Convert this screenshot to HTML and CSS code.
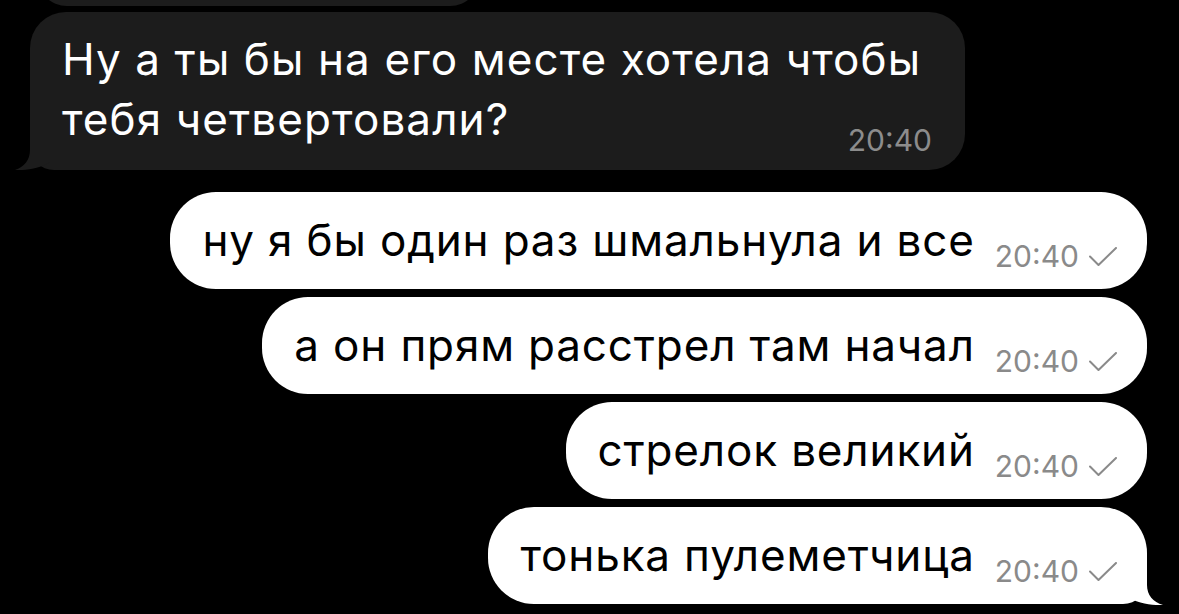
FILE: index.html
```html
<!DOCTYPE html>
<html lang="ru">
<head>
<meta charset="utf-8">
<title>Чат</title>
<link rel="stylesheet" href="styles.css">
</head>
<body>
<main class="chat">
  <div class="bubble in partial"></div>

  <div class="bubble in with-tail">
    <p class="text">Ну а ты бы на его месте хотела чтобы тебя четвертовали?</p>
    <span class="time">20:40</span>
    <svg class="tail tail-in" viewBox="0 0 50 44" width="50" height="44" aria-hidden="true"><path d="M15,0 L15,24 C15,34 9,41 0,44 C10,44.5 26,43 38,34 L38,0 Z"/></svg>
  </div>

  <div class="bubble out first">
    <p class="text">ну я бы один раз шмальнула и все</p>
    <span class="meta"><span class="time">20:40</span><svg class="check" viewBox="0 0 28 19" width="28" height="19" aria-hidden="true"><path d="M1,9.5 L9.5,18 L27,1"/></svg></span>
  </div>

  <div class="bubble out">
    <p class="text">а он прям расстрел там начал</p>
    <span class="meta"><span class="time">20:40</span><svg class="check" viewBox="0 0 28 19" width="28" height="19" aria-hidden="true"><path d="M1,9.5 L9.5,18 L27,1"/></svg></span>
  </div>

  <div class="bubble out">
    <p class="text">стрелок великий</p>
    <span class="meta"><span class="time">20:40</span><svg class="check" viewBox="0 0 28 19" width="28" height="19" aria-hidden="true"><path d="M1,9.5 L9.5,18 L27,1"/></svg></span>
  </div>

  <div class="bubble out last with-tail">
    <p class="text">тонька пулеметчица</p>
    <span class="meta"><span class="time">20:40</span><svg class="check" viewBox="0 0 28 19" width="28" height="19" aria-hidden="true"><path d="M1,9.5 L9.5,18 L27,1"/></svg></span>
    <svg class="tail tail-out" viewBox="0 0 50 44" width="50" height="44" aria-hidden="true"><path d="M34,0 L34,24 C34,34 40,41 50,44 C40,44.5 24,43 12,34 L12,0 Z"/></svg>
  </div>
</main>
</body>
</html>
```
FILE: styles.css
```css
html, body {
  margin: 0;
  padding: 0;
  background: #000;
}

body {
  width: 1179px;
  height: 614px;
  overflow: hidden;
  font-family: Inter, Roboto, "Noto Sans", sans-serif;
}

.chat {
  display: flex;
  flex-direction: column;
}

.bubble {
  position: relative;
  box-sizing: border-box;
}

.text {
  margin: 0;
}

/* incoming */
.bubble.in {
  align-self: flex-start;
  background: #1c1c1c;
  color: #fff;
  border-radius: 36px;
}

.bubble.in.partial {
  height: 60px;
  width: 443px;
  margin-top: -54px;
  margin-left: 37px;
  margin-bottom: 6px;
}

.bubble.in.with-tail {
  display: grid;
  margin-left: 30px;
  max-width: 935px;
  padding: 17px 33px 21px 32px;
  border-bottom-left-radius: 24px;
}

.bubble.in .text {
  grid-area: 1 / 1;
  font-size: 44px;
  line-height: 60px;
  letter-spacing: 1.1px;
}

.bubble.in .time {
  grid-area: 1 / 1;
  align-self: end;
  justify-self: end;
  margin-bottom: -2px;
  font-size: 30px;
  line-height: 22px;
  color: #8c8c8c;
}

/* outgoing */
.bubble.out {
  align-self: flex-end;
  display: flex;
  align-items: center;
  gap: 20px;
  margin-right: 32px;
  margin-top: 8px;
  height: 97px;
  padding: 0 30px 0 32px;
  background: #fff;
  color: #000;
  border-radius: 46px;
}

.bubble.out.first {
  margin-top: 22px;
}

.bubble.out.last {
  border-bottom-right-radius: 24px;
}

.bubble.out .text {
  font-size: 44px;
  line-height: 57px;
  letter-spacing: 0.85px;
}

.meta {
  align-self: flex-end;
  display: flex;
  align-items: center;
  gap: 10px;
  margin-bottom: 22px;
}

.meta .time {
  font-size: 30px;
  line-height: 22px;
  color: #8a8a8a;
}

.check {
  fill: none;
  stroke: #8a8a8a;
  stroke-width: 2;
  stroke-linecap: round;
  stroke-linejoin: round;
}

/* tails */
.tail {
  position: absolute;
  bottom: 0;
}

.tail-in {
  left: -15px;
  fill: #1c1c1c;
}

.tail-out {
  right: -16px;
  bottom: -1px;
  fill: #fff;
}
```
